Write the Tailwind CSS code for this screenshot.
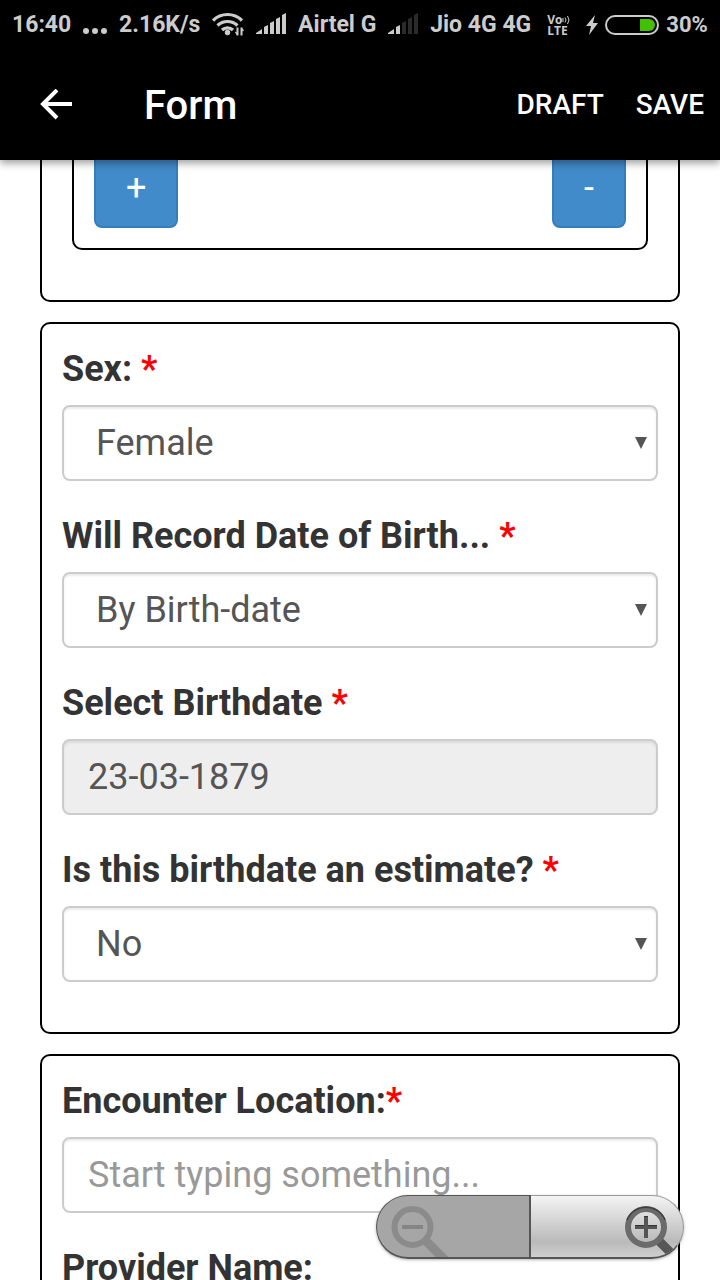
<!DOCTYPE html>
<html lang="en">
<head>
    <meta charset="UTF-8">
    <meta name="viewport" content="width=device-width, initial-scale=1.0">
    <title>Form</title>
    <script src="https://cdn.jsdelivr.net/npm/@tailwindcss/browser@4"></script>
</head>
<body class="h-screen flex flex-col overflow-hidden bg-white font-['Roboto',sans-serif] text-[#333]">

    <header class="relative z-10 bg-black text-white shadow-[0_3px_8px_rgba(0,0,0,0.4)]">
        <!-- Status bar -->
        <div class="flex items-center justify-between h-[50px] px-3 text-[23px] leading-[30px] font-bold text-[#ccc] whitespace-nowrap">
            <span>16:40</span>
            <svg class="w-6 h-[30px]" viewBox="0 0 24 30" fill="#ccc">
                <circle cx="3" cy="21" r="3"/><circle cx="12" cy="21" r="3"/><circle cx="21" cy="21" r="3"/>
            </svg>
            <span>2.16K/s</span>
            <!-- Wifi -->
            <svg class="w-8 h-[26px]" viewBox="0 0 32 26" fill="none" stroke="#ccc" stroke-width="3.200">
                <path d="M1 8.500a20.500 20.500 0 0 1 29 0M5.500 13.500a14.500 14.500 0 0 1 20 0M10 18a8 8 0 0 1 11 0"/>
                <circle cx="15.500" cy="20.500" r="2.700" fill="#ccc" stroke="none"/>
                <path stroke-width="2" d="M25.500 15.500v8M29.500 15.500v8"/>
                <path stroke-width="1.500" d="M25.500 22.500l-2-2.500M29.500 16.500l2 2.500"/>
            </svg>
            <!-- Signal, SIM 1 -->
            <svg class="w-[30px] h-6" viewBox="0 0 30 24" fill="#ccc">
                <path d="M0 21v-1l6-4v5zM8 14l4-2v9H8zM14 10l4-2v13h-4zM20 6l4-2v17h-4zM26 2l4-2v21h-4z"/>
            </svg>
            <span>Airtel G</span>
            <!-- Signal, SIM 2 -->
            <svg class="w-[30px] h-6" viewBox="0 0 30 24" fill="#ccc">
                <path d="M0 21v-1l6-4v5zM8 14l4-2v9H8z"/>
                <path fill="#2b2b2b" d="M14 10l4-2v13h-4zM20 6l4-2v17h-4zM26 2l4-2v21h-4z"/>
            </svg>
            <span>Jio 4G 4G</span>
            <div class="flex flex-col mx-1 text-[12px] leading-[11px] font-bold font-['Open_Sans',sans-serif]">
                <span class="flex items-center">Vo
                    <svg class="w-2 h-2" viewBox="0 0 8 8" fill="none" stroke="#ccc"><path d="M1 2v4M3 1.500q2 2.500 0 5M5.500 0q3 4 0 8"/></svg>
                </span>
                <span>LTE</span>
            </div>
            <div class="flex items-center gap-[7px]">
                <svg class="w-3 h-5" viewBox="0 0 12 20" fill="#ccc">
                    <path d="M9 0L0 11h5L3 20l9-12H7z"/>
                </svg>
                <svg class="w-[54px] h-5" viewBox="0 0 54 20">
                    <rect x="1" y="1" width="52" height="18" rx="9" fill="none" stroke="#ccc" stroke-width="2"/>
                    <path fill="#43c000" d="M35 4h9a6 6 0 0 1 0 12h-9z"/>
                </svg>
                <span class="text-[22px]">30%</span>
            </div>
        </div>

        <!-- Toolbar -->
        <div class="flex items-center h-[110px] px-4 pl-10">
            <button type="button" aria-label="Back">
                <svg class="block w-8 h-8" viewBox="0 0 32 32" fill="none" stroke="#fff" stroke-width="4">
                    <path d="M32 15H3M17 1L3 15l14 14"/>
                </svg>
            </button>
            <h1 class="ml-[72px] pt-0.5 flex-1 text-[40px] leading-[48px] font-medium">Form</h1>
            <div class="flex gap-8 text-[28px] font-medium">
                <button type="button">DRAFT</button>
                <button type="button">SAVE</button>
            </div>
        </div>
    </header>

    <main class="flex-1 min-h-0 overflow-hidden px-10">
        <form class="flex flex-col gap-5 -mt-[55px] text-4xl leading-[51px]">

            <!-- Repeat section, scrolled under the toolbar -->
            <section class="border-2 border-black rounded-[10px] px-[30px] py-5">
                <div class="flex justify-between mb-[30px] p-5 border-2 border-black rounded-[10px]">
                    <button type="button" class="px-[30px] py-3 border-2 border-[#357ebd] rounded-lg bg-[#428bca] text-white">+</button>
                    <button type="button" class="px-[30px] py-3 border-2 border-[#357ebd] rounded-lg bg-[#428bca] text-white">-</button>
                </div>
            </section>

            <!-- Birth details -->
            <section class="border-2 border-black rounded-[10px] p-5">
                <div class="mb-[30px]">
                    <label for="sex" class="block mb-2.5 font-bold">Sex: <span class="text-[#f00]">*</span></label>
                    <div class="relative">
                        <select id="sex" class="block w-full h-[76px] pl-8 pr-10 appearance-none border-2 border-[#ccc] rounded-lg bg-white text-[#555] shadow-[inset_0_2px_2px_rgba(0,0,0,0.075)]">
                            <option>Female</option>
                            <option>Male</option>
                        </select>
                        <svg class="absolute right-[11px] top-8 w-3 h-3 pointer-events-none" viewBox="0 0 12 12" fill="#555"><path d="M0 0h12L6 12z"/></svg>
                    </div>
                </div>
                <div class="mb-[30px]">
                    <label for="record-by" class="block mb-2.5 font-bold">Will Record Date of Birth... <span class="text-[#f00]">*</span></label>
                    <div class="relative">
                        <select id="record-by" class="block w-full h-[76px] pl-8 pr-10 appearance-none border-2 border-[#ccc] rounded-lg bg-white text-[#555] shadow-[inset_0_2px_2px_rgba(0,0,0,0.075)]">
                            <option>By Birth-date</option>
                            <option>By Age</option>
                        </select>
                        <svg class="absolute right-[11px] top-8 w-3 h-3 pointer-events-none" viewBox="0 0 12 12" fill="#555"><path d="M0 0h12L6 12z"/></svg>
                    </div>
                </div>
                <div class="mb-[30px]">
                    <label for="birthdate" class="block mb-2.5 font-bold">Select Birthdate <span class="text-[#f00]">*</span></label>
                    <input type="text" id="birthdate" value="23-03-1879" readonly
                           class="block w-full h-[76px] px-6 border-2 border-[#ccc] rounded-lg bg-[#eee] text-[#555] shadow-[inset_0_2px_2px_rgba(0,0,0,0.075)]">
                </div>
                <div class="mb-[30px]">
                    <label for="estimate" class="block mb-2.5 font-bold">Is this birthdate an estimate? <span class="text-[#f00]">*</span></label>
                    <div class="relative">
                        <select id="estimate" class="block w-full h-[76px] pl-8 pr-10 appearance-none border-2 border-[#ccc] rounded-lg bg-white text-[#555] shadow-[inset_0_2px_2px_rgba(0,0,0,0.075)]">
                            <option>No</option>
                            <option>Yes</option>
                        </select>
                        <svg class="absolute right-[11px] top-8 w-3 h-3 pointer-events-none" viewBox="0 0 12 12" fill="#555"><path d="M0 0h12L6 12z"/></svg>
                    </div>
                </div>
            </section>

            <!-- Encounter details -->
            <section class="border-2 border-black rounded-[10px] p-5">
                <div class="mb-[30px]">
                    <label for="location" class="block mb-2.5 font-bold">Encounter Location:<span class="text-[#f00]">*</span></label>
                    <input type="text" id="location" placeholder="Start typing something..."
                           class="block w-full h-[76px] px-6 border-2 border-[#ccc] rounded-lg bg-white text-[#555] placeholder:text-[#999] shadow-[inset_0_2px_2px_rgba(0,0,0,0.075)]">
                </div>
                <div class="mb-[30px]">
                    <label for="provider" class="block mb-2.5 font-bold">Provider Name:</label>
                    <input type="text" id="provider"
                           class="block w-full h-[76px] px-6 border-2 border-[#ccc] rounded-lg bg-white text-[#555]">
                </div>
            </section>
        </form>
    </main>

    <!-- Zoom controls float over the form -->
    <div class="fixed right-9 bottom-[21px] z-20 flex w-[308px] h-16 rounded-full shadow-[0_1px_3px_rgba(0,0,0,0.3)]">
        <button type="button" aria-label="Zoom out" disabled class="flex-1 overflow-hidden rounded-l-full bg-[#a6a6a6] border border-[#555] border-r-2 border-b-2">
            <svg class="block w-[76px] h-[61px]" viewBox="0 0 76 61" fill="none">
                <path stroke="#8b8b8b" stroke-width="9" d="M48 44l22 22"/>
                <circle cx="35.500" cy="31" r="18" stroke="#8b8b8b" stroke-width="6"/>
                <path stroke="#858585" stroke-width="4" d="M25 31h21"/>
            </svg>
        </button>
        <button type="button" aria-label="Zoom in" class="flex-1 flex justify-end overflow-hidden rounded-r-full border border-l-0 border-[#999] border-b-2 border-b-[#555] bg-linear-to-b from-[#f4f4f4] via-[#bababa] via-75% to-[#cfcfcf]">
            <svg class="block w-[76px] h-[61px]" viewBox="0 0 76 61" fill="none">
                <path stroke="#565656" stroke-width="9" d="M51 44l20 20"/>
                <circle cx="39" cy="31" r="18" stroke="#6b6b6b" stroke-width="6"/>
                <path stroke="#404040" stroke-width="1.500" d="M20 24a20.500 20.500 0 0 1 38 0"/>
                <path stroke="#555" stroke-width="4" d="M28 31h22M39 20v22"/>
                <path stroke="#333" d="M28 29.500h9M41 29.500h9M37 20.500h4"/>
            </svg>
        </button>
    </div>

</body>
</html>
